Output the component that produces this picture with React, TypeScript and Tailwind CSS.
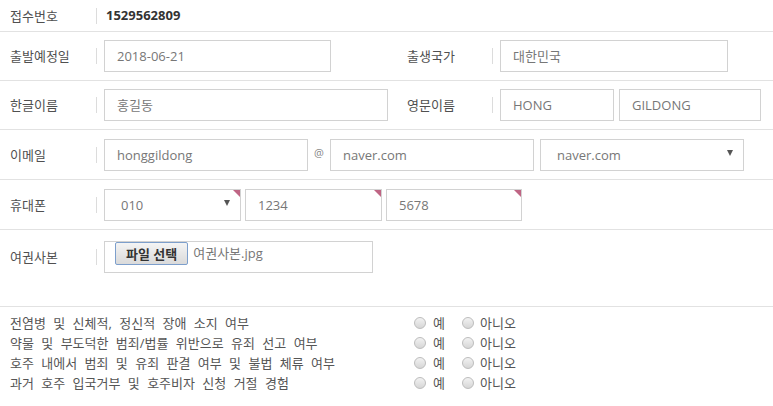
import React from "react";

const FONT = { fontFamily: '"Open Sans","Noto Sans CJK KR",sans-serif' };

function Label({ children, w = "w-[97px]" }: { children: React.ReactNode; w?: string }) {
  return (
    <div className={`flex items-center ${w} shrink-0`}>
      <div className="flex-1 pl-[10px] text-[13px] leading-[18px] text-[#505050]">{children}</div>
      <div className="w-px h-[16px] bg-[#dcdcdc]" />
    </div>
  );
}

function Box({
  w,
  children,
  pl = "pl-[12px]",
  mark = false,
  arrow = false,
}: {
  w: string;
  children?: React.ReactNode;
  pl?: string;
  mark?: boolean;
  arrow?: boolean;
}) {
  return (
    <div
      className={`relative ${w} h-[32px] shrink-0 border border-[#d2d2d2] bg-white flex items-center ${pl} pr-[8px] text-[13px] leading-[18px] text-[#777]`}
    >
      <span className="flex-1 whitespace-nowrap">{children}</span>
      {arrow && (
        <span className="w-0 h-0 mr-[2px] -mt-[3px] border-l-[3px] border-r-[3px] border-t-[6px] border-l-transparent border-r-transparent border-t-[#555]" />
      )}
      {mark && (
        <span className="absolute top-0 right-0 w-0 h-0 border-t-[7px] border-l-[7px] border-t-[#bf6584] border-l-transparent" />
      )}
    </div>
  );
}

function Radio() {
  return (
    <span className="inline-block w-[12px] h-[12px] rounded-full border border-[#bdbdbd] bg-linear-to-b from-[#f2f2f2] to-[#d6d6d6] shrink-0" />
  );
}

const questions = [
  "전염병 및 신체적, 정신적 장애 소지 여부",
  "약물 및 부도덕한 범죄/법률 위반으로 유죄 선고 여부",
  "호주 내에서 범죄 및 유죄 판결 여부 및 불법 체류 여부",
  "과거 호주 입국거부 및 호주비자 신청 거절 경험",
];

export default function App() {
  return (
    <div className="w-[773px] h-[406px] bg-white overflow-hidden" style={FONT}>
      {/* row 1 */}
      <div className="h-[32px] border-b border-[#e2e2e2] flex items-center">
        <Label>접수번호</Label>
        <div className="ml-[9px] text-[13px] font-bold text-[#333]">1529562809</div>
      </div>
      {/* row 2 */}
      <div className="h-[49px] border-b border-[#e2e2e2] flex items-center">
        <div className="w-[397px] flex items-center shrink-0">
          <Label>출발예정일</Label>
          <div className="ml-[7px]">
            <Box w="w-[227px]">2018-06-21</Box>
          </div>
        </div>
        <Label w="w-[96px]">출생국가</Label>
        <div className="ml-[7px]">
          <Box w="w-[228px]">대한민국</Box>
        </div>
      </div>
      {/* row 3 */}
      <div className="h-[49px] border-b border-[#e2e2e2] flex items-center">
        <div className="w-[397px] flex items-center shrink-0">
          <Label>한글이름</Label>
          <div className="ml-[7px]">
            <Box w="w-[284px]">홍길동</Box>
          </div>
        </div>
        <Label w="w-[96px]">영문이름</Label>
        <div className="ml-[7px] flex gap-[5px]">
          <Box w="w-[114px]">HONG</Box>
          <Box w="w-[142px]">GILDONG</Box>
        </div>
      </div>
      {/* row 4 */}
      <div className="h-[50px] border-b border-[#e2e2e2] flex items-center">
        <Label>이메일</Label>
        <div className="ml-[7px] flex items-center">
          <Box w="w-[204px]">honggildong</Box>
          <div className="w-[22px] text-center text-[11px] leading-[14px] text-[#888] -mt-[3px]">@</div>
          <Box w="w-[204px]">naver.com</Box>
          <div className="ml-[6px]">
            <Box w="w-[204px]" pl="pl-[16px]" arrow>
              naver.com
            </Box>
          </div>
        </div>
      </div>
      {/* row 5 */}
      <div className="h-[50px] border-b border-[#e2e2e2] flex items-center">
        <Label>휴대폰</Label>
        <div className="ml-[7px] flex items-center">
          <Box w="w-[137px]" pl="pl-[16px]" arrow mark>
            010
          </Box>
          <div className="ml-[4px]">
            <Box w="w-[137px]" mark>
              1234
            </Box>
          </div>
          <div className="ml-[4px]">
            <Box w="w-[136px]" mark>
              5678
            </Box>
          </div>
        </div>
      </div>
      {/* row 6 */}
      <div className="h-[77px] border-b border-[#e2e2e2] flex items-start pt-[11px]">
        <div className="h-[32px] flex items-center">
          <Label>여권사본</Label>
        </div>
        <div className="ml-[7px] w-[269px] h-[32px] border border-[#d2d2d2] flex items-start pl-[10px]">
          <button className="h-[23px] px-[10px] border border-[#7d9fcc] rounded-[2px] bg-linear-to-b from-[#f4f4f4] to-[#dadada] text-[13px] leading-[18px] font-bold text-[#333]">
            파일 선택
          </button>
          <span className="ml-[5px] mt-[2px] text-[13px] leading-[18px] text-[#777]">여권사본.jpg</span>
        </div>
      </div>
      {/* questions */}
      <div className="pt-[6px]">
        {questions.map((q) => (
          <div key={q} className="h-[20px] flex items-center">
            <div className="w-[414px] pl-[10px] text-[13px] leading-[18px] text-[#555] [word-spacing:4px] whitespace-nowrap">
              {q}
            </div>
            <Radio />
            <span className="ml-[7px] text-[13px] leading-[18px] text-[#555]">예</span>
            <span className="ml-[17px]">
              <Radio />
            </span>
            <span className="ml-[6px] text-[13px] leading-[18px] text-[#555]">아니오</span>
          </div>
        ))}
      </div>
    </div>
  );
}
